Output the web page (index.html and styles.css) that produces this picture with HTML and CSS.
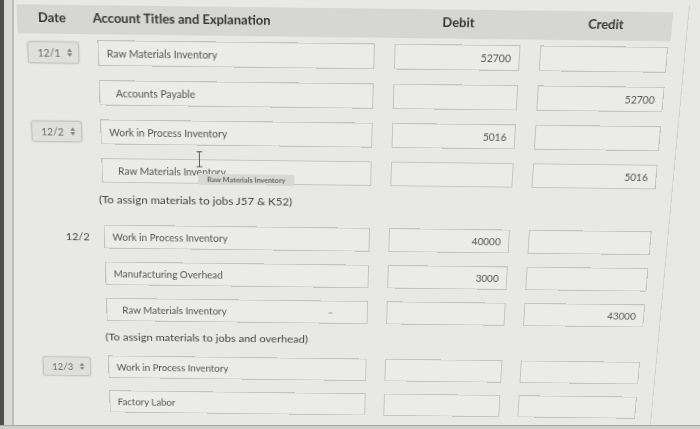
FILE: index.html
```html
<html lang="en">
<head>
  <meta charset="UTF-8">
  <title>Journal Entries</title>
  <link rel="stylesheet" href="styles.css">
</head>
<body>

  <div class="sheet">
    <div class="head">
      <div class="head-date">Date</div>
      <div class="head-title">Account Titles and Explanation</div>
      <div class="head-num">Debit</div>
      <div class="head-num">Credit</div>
    </div>

    <div class="line">
      <div class="date"><span class="pick">12/1 <svg class="arrows" viewBox="0 0 6 10"><path d="M3 0 L6 4 L0 4 Z M0 6 L6 6 L3 10 Z"/></svg></span></div>
      <div class="box">Raw Materials Inventory</div>
      <div class="box num">52700</div>
      <div class="box num"></div>
    </div>

    <div class="line">
      <div class="date"></div>
      <div class="box credit">Accounts Payable</div>
      <div class="box num"></div>
      <div class="box num">52700</div>
    </div>

    <div class="line">
      <div class="date"><span class="pick">12/2 <svg class="arrows" viewBox="0 0 6 10"><path d="M3 0 L6 4 L0 4 Z M0 6 L6 6 L3 10 Z"/></svg></span></div>
      <div class="box">Work in Process Inventory</div>
      <div class="box num">5016</div>
      <div class="box num"></div>
    </div>

    <div class="line">
      <div class="date"></div>
      <div class="box credit">
        Raw Materials Inventory
        <svg class="ibeam" viewBox="0 0 7 18"><path d="M0.5 0.8 H6.5 M3.5 0.8 V17.2 M0.5 17.2 H6.5"/></svg>
        <span class="tip">Raw Materials Inventory</span>
      </div>
      <div class="box num"></div>
      <div class="box num">5016</div>
    </div>

    <p class="note">(To assign materials to jobs J57 &amp; K52)</p>

    <div class="line">
      <div class="date"><span class="fixed">12/2</span></div>
      <div class="box">Work in Process Inventory</div>
      <div class="box num">40000</div>
      <div class="box num"></div>
    </div>

    <div class="line">
      <div class="date"></div>
      <div class="box">Manufacturing Overhead</div>
      <div class="box num">3000</div>
      <div class="box num"></div>
    </div>

    <div class="line">
      <div class="date"></div>
      <div class="box credit">Raw Materials Inventory <span class="caret"></span></div>
      <div class="box num"></div>
      <div class="box num">43000</div>
    </div>

    <p class="note second">(To assign materials to jobs and overhead)</p>

    <div class="line">
      <div class="date"><span class="pick">12/3 <svg class="arrows" viewBox="0 0 6 10"><path d="M3 0 L6 4 L0 4 Z M0 6 L6 6 L3 10 Z"/></svg></span></div>
      <div class="box">Work in Process Inventory</div>
      <div class="box num"></div>
      <div class="box num"></div>
    </div>

    <div class="line">
      <div class="date"></div>
      <div class="box">Factory Labor</div>
      <div class="box num"></div>
      <div class="box num"></div>
    </div>
  </div>

</body>
</html>
```

FILE: styles.css
```css
body {
  margin: 0;
  height: 429px;
  overflow: hidden;
  font-family: 'Lato', 'Open Sans', sans-serif;
  background: linear-gradient(to right, #4e4e4d 0, #4e4e4d 4px, #d9d9d6 4px, #d9d9d6 12px, #bdbdba 12px, #bdbdba 14px, #e8e8e5 14px);
}

body::after {
  content: "";
  position: fixed;
  left: 0;
  right: 0;
  bottom: 0;
  height: 3px;
  background: #cfcfcc;
  border-top: 1px solid #a9a9a6;
}

.sheet {
  box-sizing: border-box;
  width: 690px;
  height: 500px;
  padding: 8px 0 0 16px;
  display: flex;
  flex-direction: column;
  align-items: flex-start;
  transform: rotate(0.7deg) perspective(1000px) rotateX(-12deg);
  transform-origin: 310px 0;
  border-right: 1px solid #d2d2cf;
}

.head {
  display: grid;
  grid-template-columns: 60px 280px 127px 129px;
  column-gap: 20px;
  width: 658px;
  height: 30px;
  padding-bottom: 4px;
  box-sizing: border-box;
  align-items: center;
  background: #d6d6d3;
  color: #363636;
  font-weight: 700;
  font-size: 13px;
  margin-bottom: 6px;
}

.head-date {
  padding-left: 21px;
}

.head-title {
  margin-left: -4px;
  white-space: nowrap;
}

.head-num {
  text-align: center;
}

.line {
  display: grid;
  grid-template-columns: 60px 280px 127px 129px;
  column-gap: 20px;
  height: 27px;
  margin-bottom: 15px;
}

.date {
  display: flex;
  align-items: center;
}

.pick {
  flex: none;
  box-sizing: border-box;
  width: 52px;
  height: 23px;
  margin-left: 9px;
  padding: 0 6px 0 9px;
  display: flex;
  align-items: center;
  justify-content: space-between;
  background: #dfdfdc;
  border: 1px solid #c4c4c1;
  border-radius: 3px;
  box-shadow: 0 0 1px 1px #d8d8d5;
  color: #6a6a6a;
  font-size: 10.5px;
}

.arrows {
  width: 5px;
  height: 9px;
  fill: #7c7c7c;
}

.fixed {
  margin-left: auto;
  margin-right: -5px;
  color: #444;
  font-size: 11.5px;
}

.box {
  position: relative;
  box-sizing: border-box;
  display: flex;
  align-items: center;
  padding: 0 8px;
  background: #ebebe8;
  border: 1px solid #c3c3c0;
  color: #555;
  font-size: 10.5px;
  white-space: nowrap;
}

.box.credit {
  padding-left: 16px;
}

.num {
  justify-content: flex-end;
  padding-right: 8px;
}

.ibeam {
  position: absolute;
  left: 97px;
  top: -10px;
  width: 7px;
  height: 18px;
  fill: none;
  stroke: #555;
  stroke-width: 1;
}

.tip {
  position: absolute;
  left: 99px;
  top: 15px;
  width: 100px;
  height: 12px;
  display: flex;
  align-items: center;
  justify-content: center;
  background: #d7d7d4;
  border-radius: 2px;
  color: #666;
  font-size: 7.5px;
  font-weight: 700;
}

.caret {
  position: absolute;
  right: 37px;
  top: 13px;
  width: 4px;
  height: 1px;
  background: #8a8a8a;
}

.note {
  margin: -5px 0 19px 76px;
  line-height: 18px;
  color: #444;
  font-size: 12px;
}

.note.second {
  margin-left: 78px;
  margin-bottom: 13px;
}
```
